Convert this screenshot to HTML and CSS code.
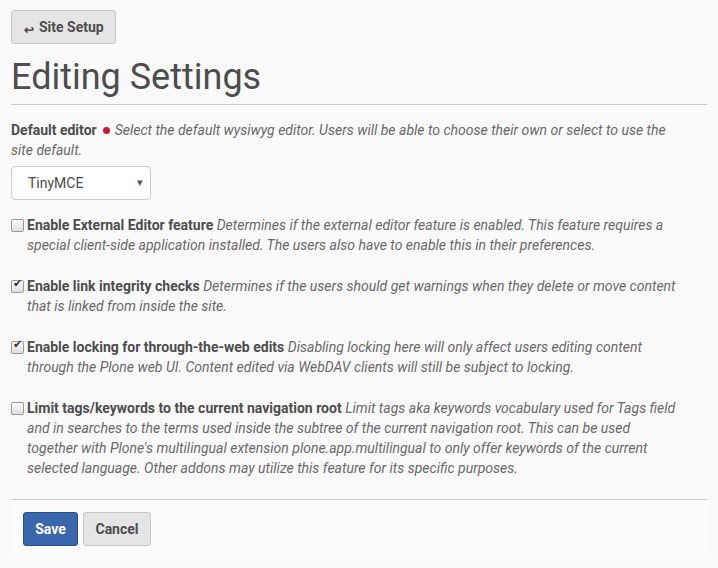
FILE: index.html
```html
<!DOCTYPE html>
<html lang="en">
<head>
<meta charset="utf-8">
<title>Editing Settings</title>
<link rel="stylesheet" href="styles.css">
</head>
<body>
<main class="page">
  <a class="btn btn-back" href="#"><span class="back-arrow">&#8617;</span>Site Setup</a>
  <h1 class="title">Editing Settings</h1>
  <form class="settings">
    <div class="field field-select">
      <div class="field-text">
        <label class="field-label">Default editor</label>
        <span class="required" title="Required"></span>
        <span class="help">Select the default wysiwyg editor. Users will be able to choose their own or select to use the site default.</span>
      </div>
      <div class="select-wrap">
        <select class="select">
          <option>TinyMCE</option>
        </select>
        <span class="select-caret">&#9662;</span>
      </div>
    </div>

    <div class="field field-check">
      <input type="checkbox" class="check">
      <div class="field-text">
        <label class="field-label">Enable External Editor feature</label>
        <span class="help">Determines if the external editor feature is enabled. This feature requires a special client-side application installed. The users also have to enable this in their preferences.</span>
      </div>
    </div>

    <div class="field field-check">
      <input type="checkbox" class="check" checked>
      <div class="field-text">
        <label class="field-label">Enable link integrity checks</label>
        <span class="help">Determines if the users should get warnings when they delete or move content that is linked from inside the site.</span>
      </div>
    </div>

    <div class="field field-check">
      <input type="checkbox" class="check" checked>
      <div class="field-text">
        <label class="field-label">Enable locking for through-the-web edits</label>
        <span class="help">Disabling locking here will only affect users editing content through the Plone web UI. Content edited via WebDAV clients will still be subject to locking.</span>
      </div>
    </div>

    <div class="field field-check">
      <input type="checkbox" class="check">
      <div class="field-text">
        <label class="field-label">Limit tags/keywords to the current navigation root</label>
        <span class="help">Limit tags aka keywords vocabulary used for Tags field and in searches to the terms used inside the subtree of the current navigation root. This can be used together with Plone's multilingual extension plone.app.multilingual to only offer keywords of the current selected language. Other addons may utilize this feature for its specific purposes.</span>
      </div>
    </div>

    <div class="form-actions">
      <button type="button" class="btn btn-primary">Save</button>
      <button type="button" class="btn btn-default">Cancel</button>
    </div>
  </form>
</main>
</body>
</html>
```

FILE: styles.css
```css
html, body {
  margin: 0;
  padding: 0;
  background: #fafafa;
}

body {
  font-family: Roboto, "Liberation Sans", sans-serif;
  font-size: 14px;
  line-height: 20px;
  color: #4d4d4d;
}

.page {
  padding: 10px 11px 0 11px;
}

.btn {
  display: inline-block;
  box-sizing: border-box;
  height: 34px;
  padding: 6px 12px;
  font-family: inherit;
  font-size: 14px;
  line-height: 20px;
  font-weight: 700;
  text-decoration: none;
  border-radius: 3px;
  border: 1px solid #c6c6c6;
  background: #e5e5e5;
  color: #4d4d4d;
  cursor: pointer;
}

.btn-back {
  width: 105px;
  padding: 6px 0 6px 12px;
}

.back-arrow {
  display: inline-block;
  font-size: 12px;
  font-weight: 700;
  margin-right: 5px;
  position: relative;
  top: 2px;
}

.title {
  margin: 11px 0 0 0;
  font-size: 36px;
  line-height: 44px;
  font-weight: 400;
  color: #4d4d4d;
  padding-bottom: 5px;
  border-bottom: 1px solid #cccccc;
}

.settings {
  padding-top: 15px;
}

.field {
  margin-bottom: 21px;
  max-width: 669px;
}

.field-check {
  display: flex;
  align-items: flex-start;
}

.field-label {
  font-weight: 700;
}

.help {
  font-style: italic;
  color: #696969;
}

.required {
  display: inline-block;
  width: 7px;
  height: 7px;
  border-radius: 50%;
  background: #c4183c;
  margin: 0 1px 0 3px;
  vertical-align: 1px;
}

.select-wrap {
  position: relative;
  width: 140px;
  margin-top: 6px;
  margin-bottom: -6px;
}

.select {
  appearance: none;
  -webkit-appearance: none;
  box-sizing: border-box;
  display: block;
  width: 140px;
  height: 34px;
  padding: 6px 12px 6px 16px;
  font-family: inherit;
  font-size: 14px;
  color: #4d4d4d;
  background: #ffffff;
  border: 1px solid #cccccc;
  border-radius: 4px;
}

.select-caret {
  position: absolute;
  right: 8px;
  top: 7px;
  font-size: 11px;
  color: #555;
  pointer-events: none;
}

.check {
  appearance: none;
  -webkit-appearance: none;
  box-sizing: border-box;
  flex: none;
  width: 13px;
  height: 13px;
  margin: 4px 3px 0 0;
  border: 1px solid #9a9a9a;
  border-radius: 2px;
  background: linear-gradient(#fcfcfc, #dedede);
  position: relative;
}

.check:checked::after {
  content: "\2714";
  position: absolute;
  left: 1px;
  top: -4px;
  font-size: 11px;
  color: #333;
}

.form-actions {
  margin-top: 0;
  border-top: 1px solid #cccccc;
  background: #fcfcfc;
  padding: 12px 12px 11px 12px;
  display: flex;
  gap: 5px;
}

.btn-primary {
  background: #3a66ab;
  border-color: #2b4f88;
  color: #ffffff;
  width: 55px;
  padding: 6px 0;
  text-align: center;
}

.btn-default {
  width: 68px;
  padding: 6px 0;
  text-align: center;
}
```
